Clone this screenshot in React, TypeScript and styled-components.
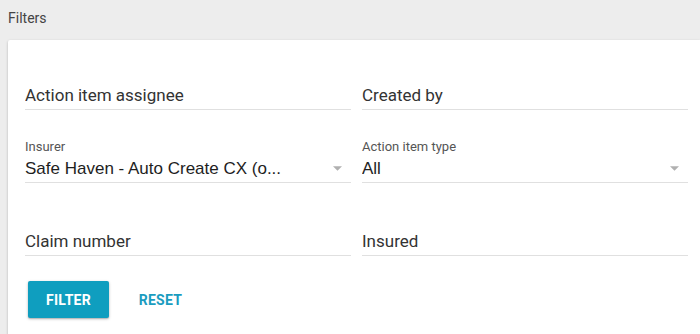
import React from 'react'
import styled, { createGlobalStyle } from 'styled-components'

const GlobalStyle = createGlobalStyle`
  html, body {
    margin: 0;
    padding: 0;
    background: #ededed;
    font-family: Roboto, "Liberation Sans", Arial, sans-serif;
    overflow: hidden;
  }
`

const Page = styled.div`
  padding: 8px 0 0 8px;
  height: 334px;
  box-sizing: border-box;
`
const Heading = styled.div`
  font-size: 14px;
  line-height: 20px;
  color: #444;
  margin-bottom: 12px;
`
const Card = styled.div`
  background: #fff;
  border-radius: 2px 0 0 2px;
  box-shadow: 0 1px 3px rgba(0, 0, 0, 0.2), 0 1px 1px rgba(0, 0, 0, 0.12);
  padding: 27px 12px 20px 17px;
  min-height: 300px;
  box-sizing: border-box;
`
const Grid = styled.div`
  display: grid;
  grid-template-columns: 1fr 1fr;
  column-gap: 11px;
  row-gap: 30px;
`
const Field = styled.div`
  display: flex;
  flex-direction: column;
  min-width: 0;
`
const Label = styled.div`
  font-size: 13px;
  line-height: 14px;
  height: 14px;
  color: #555;
`
const Input = styled.div<{ select?: boolean }>`
  display: flex;
  align-items: center;
  padding: 5px 0 4px;
  border-bottom: 1px solid #e0e0e0;
  font-family: ${p => (p.select ? '"Liberation Sans", Arial, sans-serif' : 'inherit')};
  font-size: 17px;
  line-height: 19px;
  color: ${p => (p.select ? '#1e1e1e' : '#333')};
`
const Value = styled.span`
  flex: 1;
  white-space: nowrap;
  overflow: hidden;
`
const Arrow = styled.svg`
  width: 9px;
  height: 5px;
  margin-right: 9px;
  fill: #b0b0b0;
  flex-shrink: 0;
`
const Actions = styled.div`
  display: flex;
  align-items: center;
  gap: 11px;
  margin: 25px 0 0 3px;
`
const Button = styled.button<{ primary?: boolean }>`
  width: 81px;
  height: 37px;
  border: none;
  border-radius: 2px;
  font-family: inherit;
  font-size: 14px;
  font-weight: 700;
  letter-spacing: 0.3px;
  text-transform: uppercase;
  cursor: pointer;
  background: ${p => (p.primary ? '#0f9ebf' : 'transparent')};
  color: ${p => (p.primary ? '#fff' : '#1a9cbf')};
  box-shadow: ${p => (p.primary ? '0 1px 3px rgba(0,0,0,0.25), 0 1px 1px rgba(0,0,0,0.12)' : 'none')};
`

const DropArrow = () => (
  <Arrow viewBox="0 0 10 5">
    <polygon points="0,0 10,0 5,5" />
  </Arrow>
)

type FieldProps = { label?: string; value: string; select?: boolean }

const FilterField = ({ label, value, select }: FieldProps) => (
  <Field>
    <Label>{label}</Label>
    <Input select={select}>
      <Value>{value}</Value>
      {select && <DropArrow />}
    </Input>
  </Field>
)

const App = () => (
  <>
    <GlobalStyle />
    <Page>
      <Heading>Filters</Heading>
      <Card>
        <Grid>
          <FilterField value="Action item assignee" />
          <FilterField value="Created by" />
          <FilterField label="Insurer" value="Safe Haven - Auto Create CX (o..." select />
          <FilterField label="Action item type" value="All" select />
          <FilterField value="Claim number" />
          <FilterField value="Insured" />
        </Grid>
        <Actions>
          <Button primary>Filter</Button>
          <Button>Reset</Button>
        </Actions>
      </Card>
    </Page>
  </>
)

export default App
